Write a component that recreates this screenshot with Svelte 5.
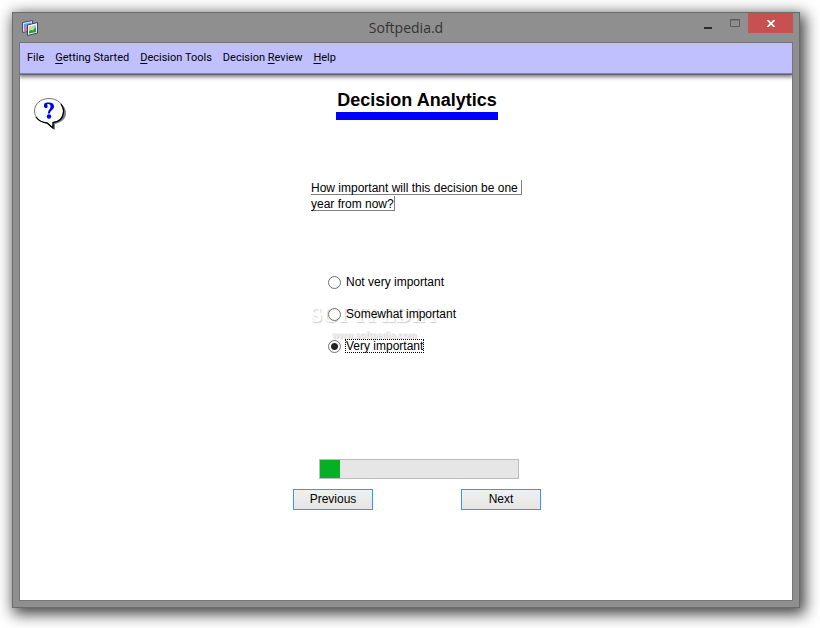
<script lang="ts">
  const menus = [
    { before: 'File', key: '', after: '' },
    { before: '', key: 'G', after: 'etting Started' },
    { before: '', key: 'D', after: 'ecision Tools' },
    { before: 'Decision ', key: 'R', after: 'eview' },
    { before: '', key: 'H', after: 'elp' }
  ];

  const questionLines = ['How important will this decision be one ', 'year from now?'];
  const options = ['Not very important', 'Somewhat important', 'Very important'];

  let selected = $state('Very important');
  let progress = $state(10);
</script>

<div class="desktop">
  <div class="window">
    <header class="titlebar">
      <svg class="app-icon" width="16" height="16" viewBox="0 0 16 16" aria-hidden="true">
        <path d="M0.5 2.5 L10.5 0.5 V10.5 L0.5 12.5 Z" fill="#cfe0fa" stroke="#4a4a78" />
        <path d="M2 4 L9 2.5 V10 L2 11 Z" fill="#5ba4ec" />
        <path d="M2 9 L4 6 L6 8 V10.5 L2 11 Z" fill="#d77a8a" />
        <path d="M5.5 5 L15.5 2.5 V13 L5.5 15.5 Z" fill="#f4f8ff" stroke="#3d3d70" />
        <path d="M7 6.5 L14 5 V12 L7 13.5 Z" fill="#8ed0f2" />
        <circle cx="9.5" cy="8" r="1.8" fill="#ffd93c" />
        <path d="M7 11.5 L9 10 L11 10.5 L14 7 V12 L7 13.5 Z" fill="#23a51e" />
      </svg>
      <h1 class="caption">Softpedia.d</h1>
      <div class="controls">
        <button class="control" aria-label="Minimize">
          <svg width="8" height="12" viewBox="0 0 8 12"><path d="M0 10 H8 V12 H0 Z" fill="#2b2b2b" /></svg>
        </button>
        <button class="control" aria-label="Maximize" disabled>
          <svg width="10" height="8" viewBox="0 0 10 8"><path d="M0.5 0.5 H9.5 V7.5 H0.5 Z M0 1 H10" fill="none" stroke="#5c5c5c" /></svg>
        </button>
        <button class="control close" aria-label="Close">
          <svg width="8" height="7" viewBox="0 0 8 7"><path d="M0.5 0 L7.5 7 M7.5 0 L0.5 7" stroke="#fff" stroke-width="1.8" /></svg>
        </button>
      </div>
    </header>

    <div class="client">
      <nav class="menubar">
        {#each menus as menu}
          <button class="menu">{menu.before}<span class="key">{menu.key}</span>{menu.after}</button>
        {/each}
      </nav>

      <main class="page">
        <button class="help" aria-label="Help">
          <svg width="32" height="32" viewBox="0 0 32 32">
            <path d="M17 3 C26 3 32 8 32 15 C32 21 28 24 21 26 V32 L14 26 Z" fill="#808080" />
            <path d="M15 0.5 C23.5 0.5 29.5 6 29.5 13 C29.5 19 25 23.5 19 24.5 V30 L13 25 C5.5 24.5 0.5 19 0.5 13 C0.5 6 6.5 0.5 15 0.5 Z" fill="#fafffc" stroke="#777" />
            <path d="M27 6 C29 9 30 13 29.5 14 C29 20 25 24 19 24.5 V30 L13 25 C8 24.5 4 22 2 19" fill="none" stroke="#000" stroke-width="1.3" />
            <path d="M10 8 C10 4.500 12 4.5 15 4.5 C18 4.5 20 6 20 8.5 C20 12 16 12 16 15.5 H14 C14 11.5 16.5 11.5 16.5 8.5 C16.5 6.500 15.500 6 13.500 6 C12.500 6.500 14 7 13.500 9 C13 10.500 10 10.500 10 8 Z" fill="#0000f0" />
            <circle cx="15" cy="18.5" r="2.2" fill="#0000f0" />
          </svg>
        </button>

        <form class="survey" onsubmit={(event) => event.preventDefault()}>
          <h2 class="heading">Decision Analytics</h2>

          <p class="question" id="question">
            {#each questionLines as line}
              <span class="line">{line}</span>
            {/each}
          </p>

          <div class="options" role="radiogroup" aria-labelledby="question">
            <div class="watermark" aria-hidden="true">
              <span class="brand">SOFTPEDIA<sup>™</sup></span>
              <span class="site">www.softpedia.com</span>
            </div>
            {#each options as option}
              <label class="option">
                <input type="radio" name="importance" value={option} bind:group={selected} />
                <span class="option-text" class:focused={selected === option}>{option}</span>
              </label>
            {/each}
          </div>

          <div class="progress" role="progressbar" aria-label="Progress" aria-valuenow={progress}>
            <div class="progress-fill" style="width: {progress}%"></div>
          </div>

          <div class="actions">
            <button class="action" type="button">Previous</button>
            <button class="action" type="submit">Next</button>
          </div>
        </form>
      </main>
    </div>
  </div>
</div>

<style>
  :global(body) {
    margin: 0;
    background: #fff;
  }

  .desktop {
    display: flex;
    box-sizing: border-box;
    min-height: 100vh;
    padding: 12px 20px 20px 12px;
    overflow: hidden;
    color: #000;
    font-family: 'Liberation Sans', Arial, sans-serif;
    font-size: 12px;
    line-height: 16px;
  }

  .window {
    display: flex;
    flex: 1;
    flex-direction: column;
    padding: 0 6px 6px;
    border: 1px solid #6b6b6b;
    background: #8f8f8f;
    box-shadow: 3px 4px 14px 2px rgba(0, 0, 0, 0.75);
  }

  button {
    padding: 0;
    border: 0;
    background: none;
    color: inherit;
    font: inherit;
  }

  /* Title bar */
  .titlebar {
    display: grid;
    grid-template-columns: 1fr auto 1fr;
    align-items: center;
    height: 29px;
  }

  .app-icon {
    margin-left: 3px;
  }

  .caption {
    margin: 0;
    color: #333;
    font-family: 'Open Sans', sans-serif;
    font-size: 14px;
    font-weight: 400;
    line-height: 20px;
  }

  .controls {
    display: flex;
    align-self: start;
    justify-content: flex-end;
  }

  .control {
    display: flex;
    align-items: center;
    justify-content: center;
    width: 27px;
    height: 20px;
  }

  .close {
    width: 45px;
    background: #c75050;
  }

  /* Client area */
  .client {
    display: flex;
    flex: 1;
    flex-direction: column;
    border: 1px solid #757575;
    background: #fff;
  }

  .menubar {
    display: flex;
    gap: 11px;
    align-items: center;
    height: 30px;
    padding: 0 7px;
    background: #c0c0ff;
    box-shadow: 0 1px 0 #8080a8, 0 2px 0 #666, 0 3px 4px 1px #777;
    clip-path: inset(0 0 -10px);
  }

  .menu {
    font-family: Roboto, 'Liberation Sans', sans-serif;
    font-size: 11px;
    white-space: pre;
  }

  .key {
    text-decoration: underline;
    text-underline-offset: 2px;
  }

  .page {
    display: flex;
    align-items: flex-start;
    padding: 16px 24px 24px 14px;
  }

  .help {
    display: flex;
    margin-top: 9px;
  }

  .survey {
    display: flex;
    flex-direction: column;
    width: 248px;
    margin: 0 auto;
  }

  .heading {
    align-self: center;
    margin: 0;
    padding: 0 1px;
    border-bottom: 8px solid #00f;
    font-size: 18px;
    line-height: 23px;
  }

  .question {
    display: flex;
    flex-direction: column;
    gap: 1px;
    align-items: flex-start;
    margin: 60px 0 0 18px;
  }

  .line {
    padding-top: 2px;
    border: solid #808080;
    border-width: 0 1px 1px 0;
    line-height: 12px;
    white-space: pre;
  }

  /* Options */
  .options {
    position: relative;
    display: flex;
    flex-direction: column;
    gap: 18px;
    align-items: flex-start;
    margin: 64px 0 0 35px;
  }

  .option {
    position: relative;
    display: flex;
    gap: 4px;
    align-items: center;
  }

  .option input {
    appearance: none;
    width: 13px;
    height: 13px;
    margin: 0;
    border: 1px solid #707070;
    border-radius: 50%;
    background: #fff;
  }

  .option input:checked {
    background: radial-gradient(circle, #222 0 3px, #fff 4px);
  }

  .option-text {
    border: 1px dotted transparent;
    line-height: 12px;
  }

  .focused {
    border-color: #000;
  }

  .watermark {
    position: absolute;
    top: 28px;
    left: -18px;
    color: #fff;
    font-family: 'Liberation Serif', serif;
    font-weight: 700;
    text-shadow: 1px 1px 1px #ccc;
  }

  .brand {
    display: block;
    font-size: 22px;
    line-height: 24px;
  }

  .brand sup {
    font-size: 8px;
    line-height: 0;
    vertical-align: 8px;
  }

  .site {
    display: block;
    padding: 2px 0 0 22px;
    color: #eee;
    font-family: 'Liberation Sans', sans-serif;
    font-size: 9px;
    line-height: 12px;
  }

  /* Progress and navigation */
  .progress {
    box-sizing: border-box;
    width: 200px;
    height: 20px;
    margin: 106px 0 0 26px;
    border: 1px solid #bcbcbc;
    background: #e6e6e6;
  }

  .progress-fill {
    height: 100%;
    background: #06b025;
  }

  .actions {
    display: flex;
    justify-content: space-between;
    margin-top: 10px;
  }

  .action {
    width: 80px;
    height: 21px;
    padding-bottom: 2px;
    border: 1px solid #3399ff;
    background: linear-gradient(#f0f0f0, #e5e5e5);
  }
</style>
